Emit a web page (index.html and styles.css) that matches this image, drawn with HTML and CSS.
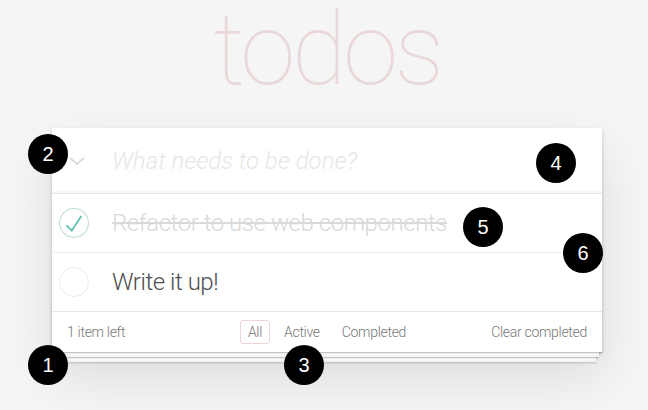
FILE: index.html
```html
<!DOCTYPE html>
<html lang="en">
<head>
<meta charset="utf-8">
<title>todos</title>
<link rel="stylesheet" href="styles.css">
</head>
<body>
<div class="page">
  <h1 class="title">todos</h1>
  <section class="app">
    <header class="new-row">
      <svg class="toggle-all" width="16" height="8" viewBox="0 0 16 8"><polyline points="1,1 8,7 15,1" fill="none" stroke="#dadada" stroke-width="1.8"/></svg>
      <div class="new-todo">What needs to be done?</div>
    </header>
    <ul class="list">
      <li class="item done">
        <svg class="check" width="30" height="30" viewBox="0 0 100 100"><circle cx="50" cy="50" r="48" fill="none" stroke="#bddad5" stroke-width="3.4"/><path fill="#5dc2af" d="M72 25L42 71 27 56l-4 4 20 20 34-52z"/></svg>
        <span class="label">Refactor to use web components</span>
      </li>
      <li class="item">
        <svg class="check" width="30" height="30" viewBox="0 0 100 100"><circle cx="50" cy="50" r="48" fill="none" stroke="#ededed" stroke-width="3.4"/></svg>
        <span class="label">Write it up!</span>
      </li>
    </ul>
    <footer class="footer">
      <span class="count">1 item left</span>
      <ul class="filters">
        <li><a class="filter selected">All</a></li>
        <li><a class="filter">Active</a></li>
        <li><a class="filter">Completed</a></li>
      </ul>
      <span class="clear">Clear completed</span>
    </footer>
  </section>
  <span class="badge b1">1</span>
  <span class="badge b2">2</span>
  <span class="badge b3">3</span>
  <span class="badge b4">4</span>
  <span class="badge b5">5</span>
  <span class="badge b6">6</span>
</div>
</body>
</html>
```
FILE: styles.css
```css
* { box-sizing: border-box; }
html, body { margin: 0; padding: 0; }
body {
  background: #f5f5f5;
  font-family: Roboto, "Liberation Sans", sans-serif;
  font-weight: 300;
  color: #4d4d4d;
  width: 648px;
  height: 410px;
  overflow: hidden;
}
.page {
  position: relative;
  width: 648px;
  height: 410px;
  padding-top: 1px;
}
.title {
  margin: -10px 0 20px 52px;
  width: 550px;
  text-align: center;
  font-size: 100px;
  line-height: normal;
  font-weight: 100;
  letter-spacing: -3.5px;
  color: rgba(175, 47, 47, 0.15);
}
.app {
  position: relative;
  width: 550px;
  margin-left: 52px;
  background: #fff;
  box-shadow: 0 2px 4px rgba(0,0,0,0.2), 0 25px 50px rgba(0,0,0,0.1);
}
.new-row {
  display: flex;
  align-items: center;
  height: 65px;
  box-shadow: inset 0 -2px 1px rgba(0,0,0,0.03);
}
.toggle-all {
  margin-left: 17px;
  margin-top: 1px;
  flex: none;
}
.new-todo {
  margin-left: 27px;
  font-size: 24px;
  font-style: italic;
  font-weight: 300;
  color: #e6e6e6;
}
.list {
  list-style: none;
  margin: 0;
  padding: 0;
  border-top: 1px solid #e6e6e6;
}
.item {
  display: flex;
  align-items: center;
  height: 59px;
  border-bottom: 1px solid #ededed;
}
.item:last-child {
  height: 58px;
  border-bottom: none;
}
.check {
  flex: none;
  margin-left: 7px;
}
.label {
  margin-left: 23px;
  font-size: 24px;
  letter-spacing: -0.45px;
  color: #4d4d4d;
}
.done .label {
  color: #d9d9d9;
  text-decoration: line-through;
}
.footer {
  position: relative;
  display: grid;
  grid-template-columns: 1fr auto 1fr;
  align-items: center;
  height: 41px;
  padding: 0 15px;
  border-top: 1px solid #e6e6e6;
  color: #777;
  font-size: 14px;
  letter-spacing: -0.3px;
}
.footer::before {
  content: '';
  position: absolute;
  right: 0;
  bottom: 0;
  left: 0;
  height: 50px;
  overflow: hidden;
  box-shadow: 0 1px 1px rgba(0,0,0,0.2),
              0 8px 0 -3px #f6f6f6,
              0 9px 1px -3px rgba(0,0,0,0.2),
              0 16px 0 -6px #f6f6f6,
              0 17px 2px -6px rgba(0,0,0,0.2);
  pointer-events: none;
}
.count, .filters, .clear { position: relative; z-index: 1; }
.count { justify-self: start; }
.clear { justify-self: end; }
.filters {
  list-style: none;
  margin: 0;
  padding: 0;
  display: flex;
  gap: 6px;
}
.filter {
  display: block;
  padding: 3px 7px;
  line-height: 16px;
  border: 1px solid transparent;
  border-radius: 3px;
  color: #777;
}
.filter.selected {
  border-color: rgba(175, 47, 47, 0.2);
}
.badge {
  position: absolute;
  width: 40px;
  height: 40px;
  border-radius: 50%;
  background: #000;
  color: #fff;
  font-family: "Liberation Sans", Arial, sans-serif;
  font-weight: 400;
  font-size: 20px;
  line-height: 40px;
  text-align: center;
  z-index: 5;
}
.b1 { left: 28px; top: 345px; }
.b2 { left: 28px; top: 134px; }
.b3 { left: 284px; top: 345px; }
.b4 { left: 536px; top: 143px; }
.b5 { left: 463px; top: 207px; }
.b6 { left: 563px; top: 233px; }
```
